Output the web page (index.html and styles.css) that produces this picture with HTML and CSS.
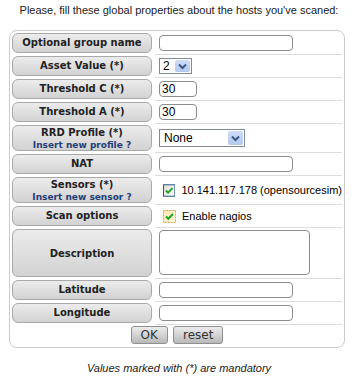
FILE: index.html
```html
<!DOCTYPE html>
<html lang="en">
<head>
  <meta charset="UTF-8" />
  <title>Hosts global properties</title>
  <link rel="stylesheet" href="styles.css">
</head>
<body>

  <p class="intro">Please, fill these global properties about the hosts you've scaned:</p>

  <div class="box">
    <table class="props">
      <tr>
        <th><div class="label">Optional group name</div></th>
        <td><input type="text" class="text wide" /></td>
      </tr>
      <tr>
        <th><div class="label">Asset Value (*)</div></th>
        <td>
          <span class="select asset">
            <span class="val">2</span>
            <span class="arrow"><svg width="9" height="7" viewBox="0 0 9 7"><path d="M1 1.5 L4.5 5 L8 1.5" fill="none" stroke="#3b5585" stroke-width="2"/></svg></span>
          </span>
        </td>
      </tr>
      <tr>
        <th><div class="label">Threshold C (*)</div></th>
        <td><input type="text" class="text short" value="30" /></td>
      </tr>
      <tr>
        <th><div class="label">Threshold A (*)</div></th>
        <td><input type="text" class="text short" value="30" /></td>
      </tr>
      <tr>
        <th>
          <div class="label two">
            RRD Profile (*)
            <a class="link" href="#">Insert new profile ?</a>
          </div>
        </th>
        <td>
          <span class="select rrd">
            <span class="val">None</span>
            <span class="arrow"><svg width="9" height="7" viewBox="0 0 9 7"><path d="M1 1.5 L4.5 5 L8 1.5" fill="none" stroke="#3b5585" stroke-width="2"/></svg></span>
          </span>
        </td>
      </tr>
      <tr>
        <th><div class="label">NAT</div></th>
        <td><input type="text" class="text wide" /></td>
      </tr>
      <tr>
        <th>
          <div class="label two">
            Sensors (*)
            <a class="link" href="#">Insert new sensor ?</a>
          </div>
        </th>
        <td>
          <label class="check">
            <svg width="13" height="13" viewBox="0 0 13 13">
              <defs>
                <linearGradient id="cb1" x1="0" y1="0" x2="1" y2="1">
                  <stop offset="0" stop-color="#dcdcd6"/>
                  <stop offset="1" stop-color="#ffffff"/>
                </linearGradient>
              </defs>
              <rect x="0.5" y="0.5" width="12" height="12" fill="url(#cb1)" stroke="#1c5180"/>
              <path d="M3 6.5 L5.3 8.8 L10 4" fill="none" stroke="#21a121" stroke-width="2"/>
            </svg>
            <span>10.141.117.178 (opensourcesim)</span>
          </label>
        </td>
      </tr>
      <tr>
        <th><div class="label">Scan options</div></th>
        <td>
          <label class="check">
            <svg width="13" height="13" viewBox="0 0 13 13">
              <defs>
                <linearGradient id="cb2" x1="0" y1="0" x2="1" y2="1">
                  <stop offset="0" stop-color="#fde7b0"/>
                  <stop offset="1" stop-color="#fff6d8"/>
                </linearGradient>
              </defs>
              <rect x="0.5" y="0.5" width="12" height="12" fill="url(#cb2)" stroke="#d9a35a" stroke-dasharray="2 1"/>
              <path d="M3 6.5 L5.3 8.8 L10 4" fill="none" stroke="#21a121" stroke-width="2"/>
            </svg>
            <span>Enable nagios</span>
          </label>
        </td>
      </tr>
      <tr>
        <th><div class="label tall">Description</div></th>
        <td><textarea class="area"></textarea></td>
      </tr>
      <tr>
        <th><div class="label">Latitude</div></th>
        <td><input type="text" class="text wide" /></td>
      </tr>
      <tr>
        <th><div class="label">Longitude</div></th>
        <td><input type="text" class="text wide" /></td>
      </tr>
      <tr class="actions">
        <td colspan="2">
          <button class="btn">OK</button>
          <button class="btn">reset</button>
        </td>
      </tr>
    </table>
  </div>

  <p class="note">Values marked with (*) are mandatory</p>

</body>
</html>
```

FILE: styles.css
```css
body {
  margin: 0;
  width: 358px;
  font-family: "Liberation Sans", Arial, sans-serif;
  font-size: 11px;
  color: #222;
  background: #fff;
}
.intro {
  margin: 4px 0 0;
  line-height: 13px;
  text-align: center;
}
.box {
  width: 330px;
  margin: 13px 0 0 9px;
  padding: 1px 2px 3px 2px;
  border: 1px solid #cacaca;
  border-radius: 8px;
}
.props {
  width: 100%;
  border-collapse: separate;
  border-spacing: 0;
  table-layout: fixed;
}
.props th {
  width: 140px;
  padding: 1px 3px 2px 0;
  font-weight: normal;
}
.props td {
  padding: 0 0 0 4px;
  border-bottom: 1px solid #dcdcdc;
  vertical-align: middle;
}
.props .actions td {
  border-bottom: none;
  padding: 1px 0 0;
  text-align: center;
}
.label {
  box-sizing: border-box;
  height: 20px;
  padding: 2px 0;
  border: 1px solid #a9a9a9;
  border-radius: 6px;
  background: linear-gradient(#ececec, #d2d2d2);
  font-family: "DejaVu Sans", Verdana, sans-serif;
  font-size: 10px;
  font-weight: bold;
  line-height: 14px;
  color: #222;
  text-align: center;
}
.label.two {
  height: 26px;
  padding: 0;
  line-height: 14px;
}
.label.tall {
  height: 48px;
  line-height: 44px;
}
.link {
  display: block;
  font-size: 9px;
  line-height: 10px;
  color: #1f3d78;
  text-decoration: none;
}
.text {
  display: block;
  box-sizing: border-box;
  height: 16px;
  padding: 0 2px;
  border: 1px solid #8c8c8c;
  border-radius: 4px;
  font-family: "Liberation Sans", Arial, sans-serif;
  font-size: 12px;
  color: #000;
  background: #fff;
}
.text.wide {
  width: 134px;
}
.text.short {
  width: 38px;
}
.select {
  display: flex;
  align-items: center;
  justify-content: space-between;
  box-sizing: border-box;
  border: 1px solid #7f8b98;
  background: #fff;
  font-size: 12px;
  color: #000;
}
.select .val {
  padding-left: 3px;
}
.select .arrow {
  display: flex;
  align-items: center;
  justify-content: center;
  width: 15px;
  align-self: stretch;
  margin: 1px;
  border-radius: 2px;
  background: linear-gradient(#cfdcf6, #b4c8ef);
}
.select.asset {
  width: 33px;
  height: 16px;
}
.select.rrd {
  width: 86px;
  height: 18px;
}
.select.rrd .val {
  padding-left: 4px;
}
.check {
  display: flex;
  align-items: center;
  gap: 6px;
  padding-left: 4px;
  font-size: 11px;
  color: #000;
  white-space: nowrap;
}
.area {
  display: block;
  box-sizing: border-box;
  width: 151px;
  height: 45px;
  margin: 2px 0 3px;
  border: 1px solid #8c8c8c;
  border-radius: 4px;
  resize: none;
}
.btn {
  height: 18px;
  margin: 0 1px;
  padding: 0 9px;
  border: 1px solid #8f8f8f;
  border-radius: 3px;
  background: linear-gradient(#ececec, #b9b9b9);
  font-family: "DejaVu Sans", Verdana, sans-serif;
  font-size: 12px;
  line-height: 16px;
  color: #333;
}
.note {
  margin: 14px 0 0;
  font-style: italic;
  text-align: center;
}
```
